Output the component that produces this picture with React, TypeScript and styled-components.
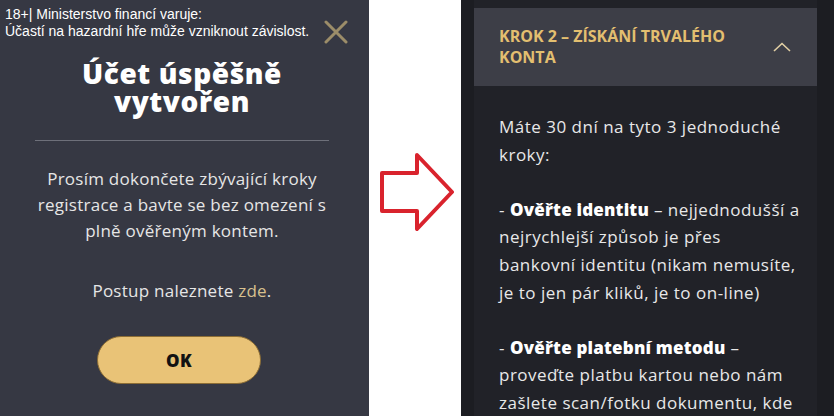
import React from 'react';
import styled, { createGlobalStyle } from 'styled-components';

const Global = createGlobalStyle`
  html, body { margin: 0; padding: 0; background: #ffffff; }
  body { width: 834px; height: 416px; overflow: hidden; font-family: "Open Sans", "DejaVu Sans", sans-serif; }
  * { box-sizing: border-box; }
`;

const Page = styled.div`
  display: flex;
  width: 834px;
  height: 416px;
  overflow: hidden;
`;

const LeftPanel = styled.section`
  flex: none;
  width: 369px;
  background: #363843;
  display: flex;
  flex-direction: column;
  align-items: center;
  padding-right: 5px;
`;

const TopBar = styled.div`
  align-self: stretch;
  display: flex;
  justify-content: space-between;
  align-items: flex-start;
  padding: 6px 16px 0 5px;
`;

const Warning = styled.p`
  margin: 0;
  font-family: "Liberation Sans", Arial, sans-serif;
  font-size: 14px;
  line-height: 17px;
  color: #ffffff;
`;

const CloseButton = styled.button`
  margin-top: 14px;
  width: 24px;
  height: 24px;
  padding: 0;
  border: 0;
  background: none;
  display: flex;
  cursor: pointer;
`;

const Title = styled.h1`
  margin: 15px 0 0;
  font-size: 28px;
  font-weight: 800;
  line-height: 28px;
  letter-spacing: 0.6px;
  color: #ffffff;
  text-align: center;
`;

const Divider = styled.hr`
  align-self: stretch;
  margin: 25px 35px 0;
  border: 0;
  height: 1px;
  background: #6e707a;
`;

const Message = styled.p<{ $gap: number }>`
  margin: ${(p) => p.$gap}px 0 0;
  font-size: 17px;
  line-height: 26px;
  letter-spacing: 0.25px;
  color: #e6e6e6;
  text-align: center;
`;

const Link = styled.a`
  color: #d8c08e;
  text-decoration: none;
`;

const OkButton = styled.button`
  margin-top: 32px;
  margin-right: 6px;
  width: 164px;
  height: 48px;
  border-radius: 24px;
  border: 1px solid #8c6d35;
  background: #e9c377;
  font-family: "Open Sans", sans-serif;
  font-size: 17px;
  font-weight: 800;
  letter-spacing: 0.5px;
  color: #121212;
  cursor: pointer;
`;

const Gap = styled.div`
  flex: none;
  width: 92px;
  background: #ffffff;
  padding: 153px 0 0 11px;
`;

const RightPanel = styled.section`
  flex: 1;
  background: #1c1d22;
  padding-left: 13px;
  display: flex;
`;

const Column = styled.div`
  width: 343px;
  background: #212228;
  display: flex;
  flex-direction: column;
`;

const StepHeader = styled.div`
  margin-top: 8px;
  padding: 18px 26px 18px 25px;
  background: #3d3e47;
  display: flex;
  align-items: center;
  gap: 14px;
`;

const StepTitle = styled.h2`
  flex: 1;
  margin: 0;
  font-size: 16px;
  font-weight: 700;
  line-height: 21px;
  color: #e3bf70;
  text-transform: uppercase;
`;

const StepBody = styled.div`
  padding: 27px 0 0 25px;
  font-size: 17px;
  line-height: 27.6px;
  letter-spacing: 0.5px;
  color: #e8e8e8;
  white-space: nowrap;
`;

const Para = styled.p`
  margin: 0 0 27.6px;
  b { color: #ffffff; font-weight: 800; letter-spacing: 0.2px; }
`;

export default function App() {
  return (
    <>
      <Global />
      <Page>
        <LeftPanel>
          <TopBar>
            <Warning>
              18+| Ministerstvo financí varuje:
              <br />
              Účastí na hazardní hře může vzniknout závislost.
            </Warning>
            <CloseButton aria-label="Zavřít">
              <svg width="24" height="24" viewBox="0 0 24 24">
                <path d="M2 2 L22 22 M22 2 L2 22" stroke="#9c8d69" strokeWidth="3" strokeLinecap="round" />
              </svg>
            </CloseButton>
          </TopBar>
          <Title>
            Účet úspěšně
            <br />
            vytvořen
          </Title>
          <Divider />
          <Message $gap={25}>
            Prosím dokončete zbývající kroky
            <br />
            registrace a bavte se bez omezení s
            <br />
            plně ověřeným kontem.
          </Message>
          <Message $gap={34}>
            Postup naleznete <Link href="#">zde</Link>.
          </Message>
          <OkButton>OK</OkButton>
        </LeftPanel>
        <Gap>
          <svg width="74" height="78" viewBox="0 0 74 78">
            <polygon
              points="2,20 37,20 37,2 72,39 37,76 37,58 2,58"
              fill="none"
              stroke="#d9232d"
              strokeWidth="4"
              strokeLinejoin="round"
            />
          </svg>
        </Gap>
        <RightPanel>
          <Column>
            <StepHeader>
              <StepTitle>Krok 2 – získání trvalého konta</StepTitle>
              <svg width="18" height="10" viewBox="0 0 18 10">
                <path d="M1 9 L9 1.5 L17 9" fill="none" stroke="#e2cfa4" strokeWidth="1.6" />
              </svg>
            </StepHeader>
            <StepBody>
              <Para>
                Máte 30 dní na tyto 3 jednoduché
                <br />
                kroky:
              </Para>
              <Para>
                - <b>Ověřte identitu</b> – nejjednodušší a
                <br />
                nejrychlejší způsob je přes
                <br />
                bankovní identitu (nikam nemusíte,
                <br />
                je to jen pár kliků, je to on-line)
              </Para>
              <Para>
                - <b>Ověřte platební metodu</b> –
                <br />
                proveďte platbu kartou nebo nám
                <br />
                zašlete scan/fotku dokumentu, kde
              </Para>
            </StepBody>
          </Column>
        </RightPanel>
      </Page>
    </>
  );
}
